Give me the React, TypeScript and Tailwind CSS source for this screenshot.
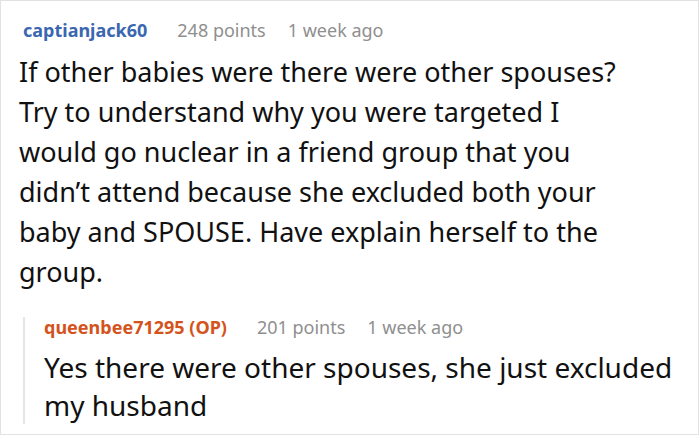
export default function App() {
  return (
    <div className="w-[699px] h-[435px] border border-[#e2e2e2] bg-white" style={{ fontFamily: '"Noto Sans", "Open Sans", sans-serif' }}>
      <div className="pl-[18px] pt-[16px]">
        <div className="flex items-baseline pl-[4px] text-[18px] leading-[26px]">
          <span className="font-bold text-[#3a67b0]">captianjack60</span>
          <span className="ml-[30px] text-[#8f8f8f]">248 points</span>
          <span className="ml-[22px] text-[#8f8f8f]">1 week ago</span>
        </div>
        <p className="mt-[9px] w-[660px] text-[27px] leading-[40px] text-[#111]">
          If other babies were there were other spouses?<br />
          Try to understand why you were targeted I<br />
          would go nuclear in a friend group that you<br />
          didn’t attend because she excluded both your<br />
          baby and SPOUSE. Have explain herself to the<br />
          group.
        </p>
        <div className="mt-[25px] ml-[4px] border-l-2 border-[#e6e6e6] pl-[19px]">
          <div className="flex items-baseline text-[18px] leading-[20px]">
            <span className="font-bold text-[#d4531c]">queenbee71295 (OP)</span>
            <span className="ml-[30px] text-[#8f8f8f]">201 points</span>
            <span className="ml-[22px] text-[#8f8f8f]">1 week ago</span>
          </div>
          <p className="mt-[11px] w-[640px] text-[28px] leading-[38px] text-[#111]">
            Yes there were other spouses, she just excluded<br />
            my husband
          </p>
        </div>
      </div>
    </div>
  );
}
